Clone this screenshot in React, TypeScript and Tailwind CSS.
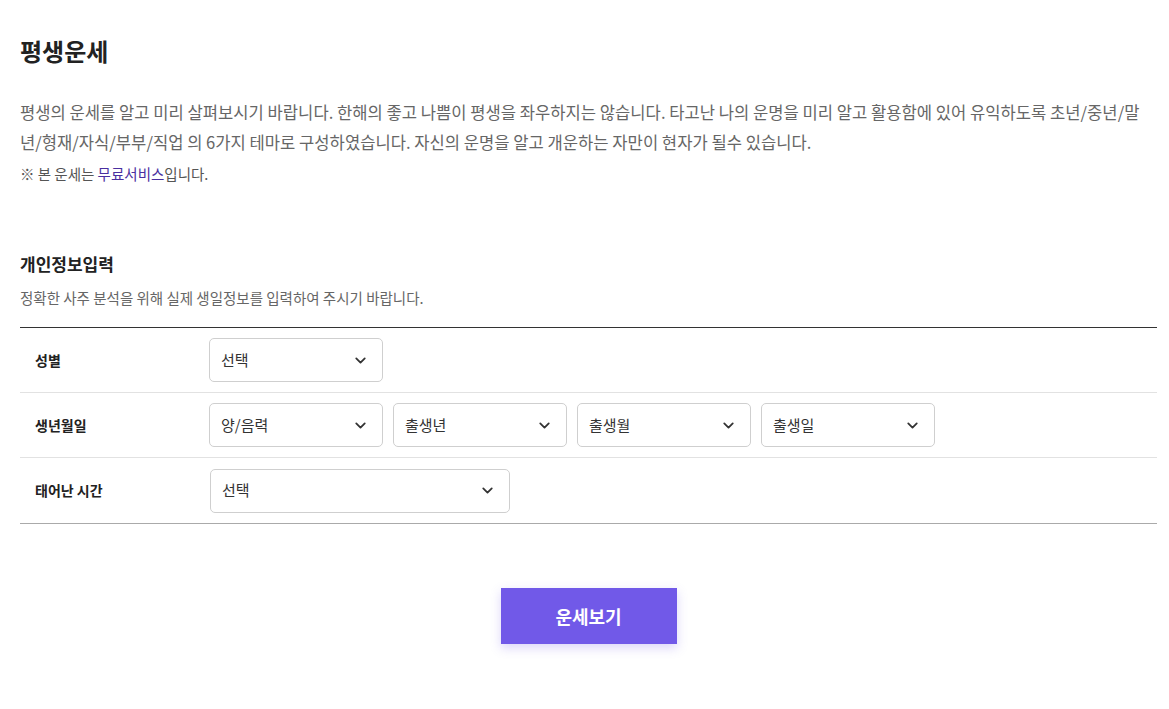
import { ChevronDown } from "lucide-react";

function Select({ label, width }: { label: string; width: string }) {
  return (
    <div
      className={`${width} h-[44px] flex items-center justify-between pl-[11px] pr-[13px] border border-[#cfcfcf] rounded-[5px] bg-white text-[15px] text-[#333]`}
    >
      <span>{label}</span>
      <ChevronDown size={17} strokeWidth={2.5} className="text-[#333]" />
    </div>
  );
}

function Row({ label, children, last }: { label: string; children: React.ReactNode; last?: boolean }) {
  return (
    <div className={`flex items-center h-[65px] ${last ? "" : "border-b border-[#e2e2e2]"}`}>
      <div className="w-[189px] pl-[15px] text-[14px] font-bold text-[#222]">{label}</div>
      <div className="flex gap-[10px]">{children}</div>
    </div>
  );
}

export default function App() {
  return (
    <div
      className="bg-white min-h-[709px] pl-[20px] pr-[12px] text-[#333]"
      style={{ fontFamily: '"Noto Sans CJK KR", "Noto Sans", sans-serif' }}
    >
      <h1 className="pt-[33px] text-[24px] font-bold text-[#222] leading-[36px]">평생운세</h1>

      <p className="mt-[28px] text-[16.6px] leading-[30px] text-[#666]">
        평생의 운세를 알고 미리 살펴보시기 바랍니다. 한해의 좋고 나쁨이 평생을 좌우하지는 않습니다. 타고난 나의 운명을 미리 알고 활용함에 있어 유익하도록 초년/중년/말년/형재/자식/부부/직업 의 6가지 테마로 구성하였습니다. 자신의 운명을 알고 개운하는 자만이 현자가 될수 있습니다.
      </p>
      <p className="mt-[7px] text-[14.5px] leading-[20px] text-[#555]">
        ※ 본 운세는 <span className="text-[#4a2fa0]">무료서비스</span>입니다.
      </p>

      <h2 className="mt-[67px] text-[17px] font-bold text-[#222] leading-[26px]">개인정보입력</h2>
      <p className="mt-[11px] text-[14.5px] text-[#666] leading-[20px]">
        정확한 사주 분석을 위해 실제 생일정보를 입력하여 주시기 바랍니다.
      </p>

      <div className="mt-[19px] border-t border-[#333] border-b border-b-[#aaa]">
        <Row label="성별">
          <Select label="선택" width="w-[174px]" />
        </Row>
        <Row label="생년월일">
          <Select label="양/음력" width="w-[174px]" />
          <Select label="출생년" width="w-[174px]" />
          <Select label="출생월" width="w-[174px]" />
          <Select label="출생일" width="w-[174px]" />
        </Row>
        <Row label="태어난 시간" last>
          <div className="pl-[1px]">
            <Select label="선택" width="w-[300px]" />
          </div>
        </Row>
      </div>

      <div className="flex justify-center mt-[64px]">
        <button className="w-[176px] h-[56px] bg-[#7159e8] text-white text-[18px] font-bold shadow-[0_4px_10px_rgba(113,89,232,0.25)]">
          운세보기
        </button>
      </div>
    </div>
  );
}
